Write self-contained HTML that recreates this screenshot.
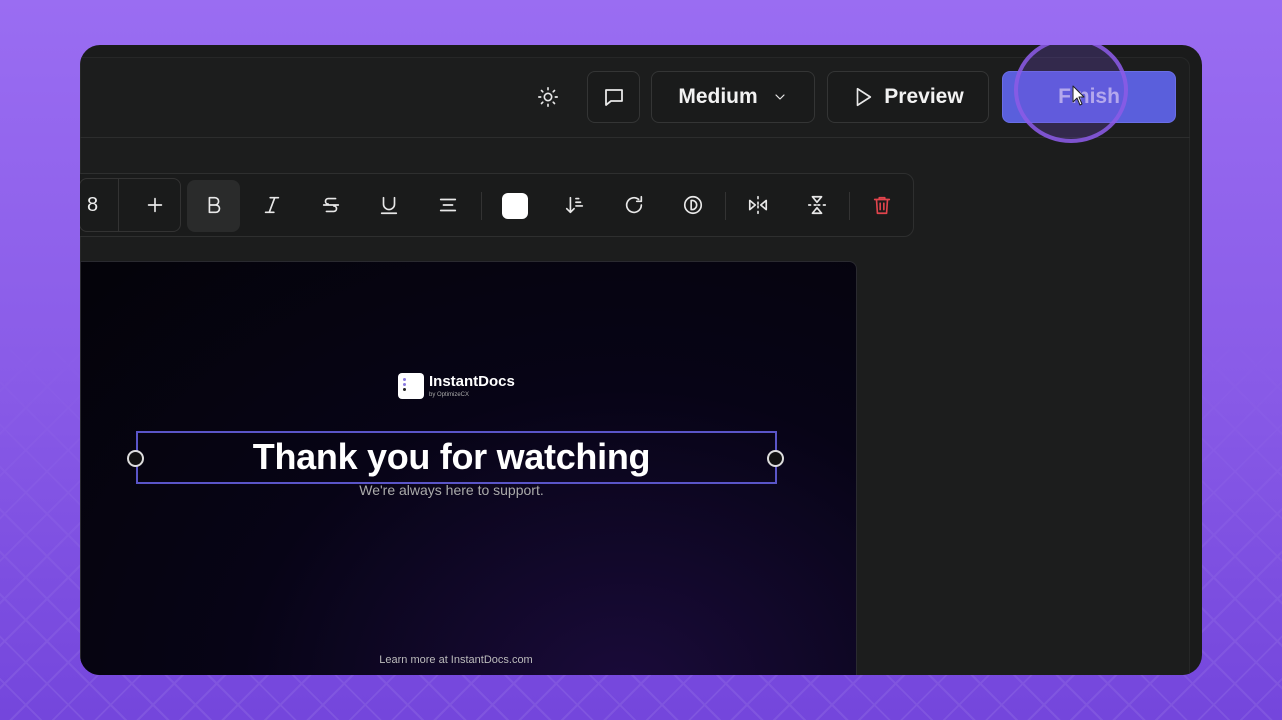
<!DOCTYPE html>
<html><head><meta charset="utf-8"><style>
*{margin:0;padding:0;box-sizing:border-box}
body{width:1282px;height:720px;overflow:hidden;font-family:"Liberation Sans",sans-serif;
background:linear-gradient(180deg,#9a6df2 0%,#8a5ce8 50%,#7446dc 100%);position:relative}
.pat{position:absolute;inset:0;opacity:.08;background-image:
repeating-linear-gradient(45deg,transparent 0 28px,#fff 28px 30px),
repeating-linear-gradient(-45deg,transparent 0 28px,#fff 28px 30px);
-webkit-mask-image:linear-gradient(180deg,transparent 45%,#000 100%)}
.win{position:absolute;left:80px;top:45px;width:1122px;height:630px;border-radius:20px;background:#1a1b1b;overflow:hidden}
.inner{position:absolute;left:0;top:12px;width:1110px;height:640px;background:#1c1d1d;border-top-right-radius:10px;border:1px solid #262727}
.hline{position:absolute;left:0;top:92px;width:1110px;height:1px;background:#2c2d2d}
.btn{position:absolute;top:26px;height:52px;border:1px solid #343535;border-radius:8px;color:#f2f2f2;font-size:21px;font-weight:bold;display:flex;align-items:center;justify-content:center;background:#1a1b1b}
.tb{position:absolute;left:-10px;top:128px;width:844px;height:64px;border:1px solid #2e2f2f;border-radius:10px;background:#1a1b1b}
.ic{position:absolute;top:0;height:62px;display:flex;align-items:center;justify-content:center;width:52px}
.sep{position:absolute;top:18px;width:1px;height:28px;background:#333}
.canvas{position:absolute;left:0;top:216px;width:777px;height:430px;background:radial-gradient(ellipse at 70% 100%,#1a0b3a 0%,#070416 50%,#040309 100%);border:1px solid #2a2a30;border-radius:0 8px 0 0}
svg{stroke:#e8e8e8;fill:none;stroke-width:1.8;stroke-linecap:round;stroke-linejoin:round}
</style></head><body>
<div class="pat"></div>
<div class="win">
<div class="inner"></div>
<div class="hline" style="top:92px"></div>
<svg style="position:absolute;left:457px;top:41px" width="22" height="22" viewBox="0 0 24 24"><circle cx="12" cy="12" r="4"/><path d="M12 2v2M12 20v2M2 12h2M20 12h2M4.9 4.9l1.4 1.4M17.7 17.7l1.4 1.4M4.9 19.1l1.4-1.4M17.7 6.3l1.4-1.4"/></svg>
<div class="btn" style="left:507px;width:53px"><svg width="24" height="24" viewBox="0 0 24 24"><path d="M4 5h16v11H9l-5 4z"/></svg></div>
<div class="btn" style="left:571px;width:164px">Medium <svg style="margin-left:14px" width="16" height="16" viewBox="0 0 24 24"><path d="M6 9l6 6 6-6"/></svg></div>
<div class="btn" style="left:747px;width:162px"><svg style="margin-right:10px" width="22" height="22" viewBox="0 0 24 24"><path d="M6 3l14 9-14 9z"/></svg>Preview</div>
<div class="btn" style="left:922px;width:174px;background:#5a5fdc;border-color:#6a6ee6;color:#c9c6f3">Finish</div>
<div style="position:absolute;left:934px;top:-8px;width:114px;height:106px;border-radius:50%;border:4px solid rgba(140,90,230,.85);background:rgba(120,80,220,.25)"></div>
<svg style="position:absolute;left:992px;top:40px" width="14" height="22" viewBox="0 0 14 22"><path d="M1 1v16l4-4 3 7 2-1-3-7h5z" fill="#fff" stroke="#222" stroke-width="1"/></svg>
<div class="tb">
<div style="position:absolute;left:8px;top:4px;width:102px;height:54px;border:1px solid #333;border-radius:8px"></div>
<div style="position:absolute;left:47px;top:4px;width:1px;height:54px;background:#333"></div>
<div style="position:absolute;left:16px;top:20px;color:#eee;font-size:20px">8</div>
<div class="ic" style="left:58px"><svg width="22" height="22" viewBox="0 0 24 24"><path d="M12 5v14M5 12h14"/></svg></div>
<div style="position:absolute;left:116px;top:6px;width:53px;height:52px;background:#2a2b2b;border-radius:8px"></div>
<div class="ic" style="left:116px;width:53px"><svg width="22" height="22" viewBox="0 0 24 24"><path d="M7 4h6a4 4 0 010 8H7zM7 12h7a4 4 0 010 8H7z"/></svg></div>
<div class="ic" style="left:175px"><svg width="22" height="22" viewBox="0 0 24 24"><path d="M10 4h9M5 20h9M15 4l-6 16"/></svg></div>
<div class="ic" style="left:234px"><svg width="22" height="22" viewBox="0 0 24 24"><path d="M4 12h16M17 5H9a3 3 0 000 6M7 19h8a3 3 0 000-6"/></svg></div>
<div class="ic" style="left:292px"><svg width="22" height="22" viewBox="0 0 24 24"><path d="M6 4v7a6 6 0 0012 0V4M4 21h16"/></svg></div>
<div class="ic" style="left:351px"><svg width="22" height="22" viewBox="0 0 24 24"><path d="M4 6h16M7 12h10M4 18h16"/></svg></div>
<div class="sep" style="left:410px"></div>
<div style="position:absolute;left:431px;top:19px;width:26px;height:26px;background:#fff;border-radius:6px"></div>
<div class="ic" style="left:478px"><svg width="22" height="22" viewBox="0 0 24 24"><path d="M7 4v16M3 16l4 4 4-4M13 5h3M13 9h5M13 13h7"/></svg></div>
<div class="ic" style="left:537px"><svg width="22" height="22" viewBox="0 0 24 24"><path d="M20 12a8 8 0 11-3-6.2M20 3v5h-5"/></svg></div>
<div class="ic" style="left:596px"><svg width="22" height="22" viewBox="0 0 24 24"><circle cx="12" cy="12" r="9"/><path d="M10 7h1a5 5 0 010 10h-1z"/></svg></div>
<div class="sep" style="left:654px"></div>
<div class="ic" style="left:661px"><svg width="22" height="22" viewBox="0 0 24 24"><path d="M12 3v2M12 9v2M12 13v2M12 19v2M3 7l6 5-6 5zM21 7l-6 5 6 5z"/></svg></div>
<div class="ic" style="left:720px"><svg width="22" height="22" viewBox="0 0 24 24"><path d="M3 12h2M9 12h2M13 12h2M19 12h2M7 3l5 6 5-6zM7 21l5-6 5 6z"/></svg></div>
<div class="sep" style="left:778px"></div>
<div class="ic" style="left:785px"><svg width="22" height="22" viewBox="0 0 24 24" style="stroke:#e0444c"><path d="M4 6h16M9 6V4h6v2M6 6l1 15h10l1-15M10 10v7M14 10v7"/></svg></div>
</div>
<div class="canvas">
<div style="position:absolute;left:317px;top:111px;width:26px;height:26px;background:#fff;border-radius:4px"></div>
<div style="position:absolute;left:322px;top:116px;width:3px;height:3px;border-radius:50%;background:#8a7ae0;box-shadow:0 5px 0 #8a7ae0,0 10px 0 #222"></div>
<div style="position:absolute;left:348px;top:111px;color:#fff;font-size:15px;font-weight:bold">InstantDocs</div>
<div style="position:absolute;left:348px;top:130px;color:#aaa;font-size:6px">by OptimizeCX</div>
<div style="position:absolute;left:55px;top:169px;width:641px;height:53px;border:2px solid #5a55c8"></div>
<div style="position:absolute;left:46px;top:188px;width:17px;height:17px;border-radius:50%;border:2px solid #ddd;background:#111"></div>
<div style="position:absolute;left:686px;top:188px;width:17px;height:17px;border-radius:50%;border:2px solid #ddd;background:#111"></div>
<div style="position:absolute;left:50px;top:174px;width:641px;text-align:center;color:#fff;font-size:36px;font-weight:bold;letter-spacing:-0.3px">Thank you for watching</div>
<div style="position:absolute;left:50px;top:220px;width:641px;text-align:center;color:#aaa;font-size:14px">We're always here to support.</div>
<div style="position:absolute;left:0;top:392px;width:750px;text-align:center;color:#bbb;font-size:11px">Learn more at InstantDocs.com</div>
</div>
</div>
</body></html>
